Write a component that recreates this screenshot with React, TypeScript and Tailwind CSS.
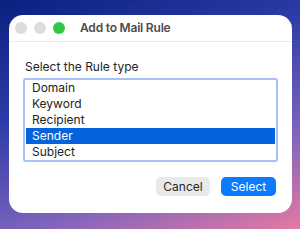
import React, { useState } from 'react';

const rules = ['Domain', 'Keyword', 'Recipient', 'Sender', 'Subject'];

const App: React.FC = () => {
  const [selected, setSelected] = useState('Sender');

  return (
    <div
      className="w-[300px] h-[229px] overflow-hidden pt-[15px] pl-[9px] bg-[linear-gradient(160deg,#0a2180_0%,#2a3aa6_35%,#7a63bd_70%,#e679a2_100%)]"
      style={{ fontFamily: 'Inter, "Noto Sans", sans-serif' }}
    >
      <div className="w-[283px] h-[198px] bg-white rounded-[14px] flex flex-col overflow-hidden">
        {/* title bar */}
        <div className="h-[27px] flex items-center border-b border-[#ececec] pl-[6px]">
          <div className="flex items-center gap-[7px]">
            <span className="w-[12px] h-[12px] rounded-full bg-[#dcdcdc]" />
            <span className="w-[12px] h-[12px] rounded-full bg-[#dcdcdc]" />
            <span className="w-[12px] h-[12px] rounded-full bg-[#33c748]" />
          </div>
          <span className="ml-[15px] text-[12px] font-semibold tracking-[-0.2px] text-[#4b4b4b]">Add to Mail Rule</span>
        </div>

        <div className="flex flex-col px-[14px] pt-[17px]">
          <div className="pl-[2px] text-[12px] leading-[16px] text-[#262626] mb-[3px]">Select the Rule type</div>
          <div className="border-2 border-[#a4c2f7] rounded-[3px] px-[1px]">
            {rules.map((r) => (
              <div
                key={r}
                onClick={() => setSelected(r)}
                className={`h-[16px] leading-[16px] pl-[6px] text-[12px] ${
                  r === selected ? 'bg-[#0563dd] text-white' : 'text-[#222222]'
                }`}
              >
                {r}
              </div>
            ))}
          </div>
          <div className="flex justify-end gap-[11px] mt-[15px] pr-[2px]">
            <button className="w-[54px] h-[19px] rounded-[5px] bg-[#e9e9e9] text-[12px] text-[#262626]">Cancel</button>
            <button className="w-[55px] h-[19px] rounded-[5px] bg-[#0a7bff] text-[12px] text-white">Select</button>
          </div>
        </div>
      </div>
    </div>
  );
};

export default App;
